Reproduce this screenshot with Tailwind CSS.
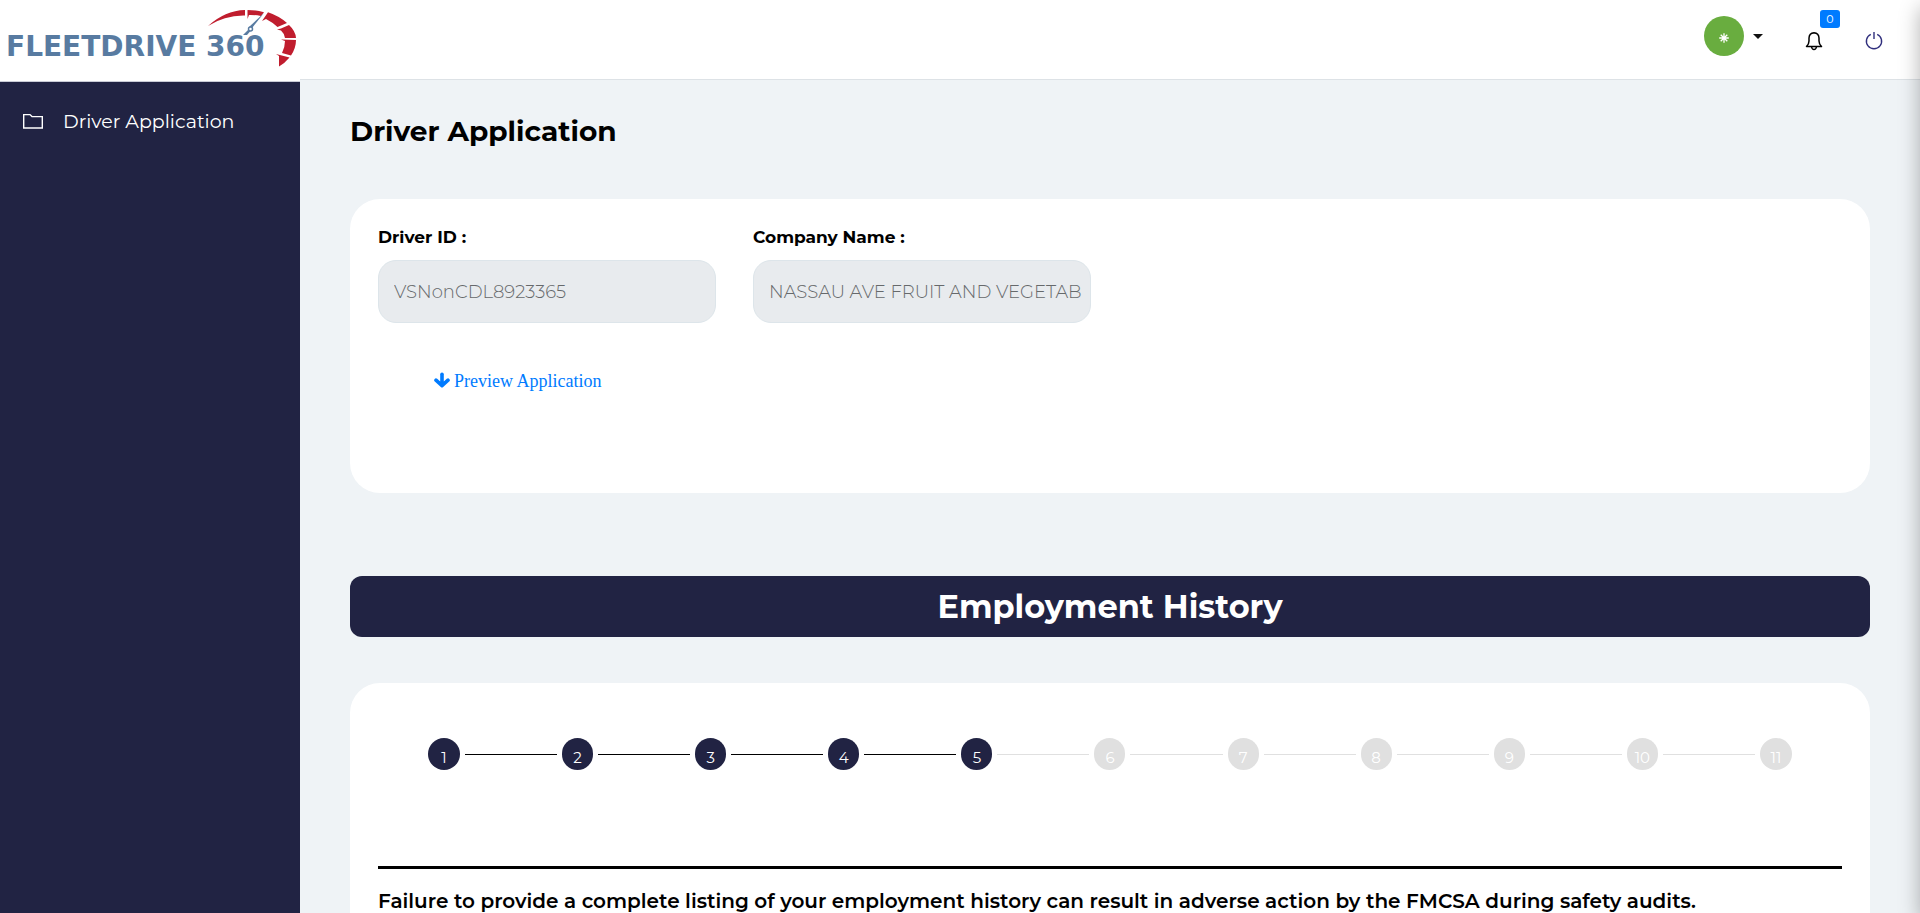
<!DOCTYPE html>
<html lang="en">
<head>
<meta charset="utf-8">
<meta name="viewport" content="width=device-width, initial-scale=1">
<title>Driver Application</title>
<script src="https://cdn.jsdelivr.net/npm/@tailwindcss/browser@4"></script>
</head>
<body class="flex min-h-screen bg-[#eff3f6] font-[Montserrat,Inter,sans-serif] text-black">

<aside class="flex w-[300px] shrink-0 flex-col bg-[#212343]">
  <a href="#" aria-label="FleetDrive 360 home" class="block h-[82px] border-b border-[#c9cbd6] bg-white">
    <svg viewBox="0 0 300 80" class="h-20 w-full">
      <text x="6" y="56" font-family="'DejaVu Sans', sans-serif" font-weight="700" font-size="28" fill="#587ba1">FLEETDRIVE 360</text>
      <g fill="#c01d2e">
        <path d="M208 26Q225 10.500 245 10V15.500Q225 15 208 26Z"/>
        <path d="M247.500 10Q256 10 264 12.300L261 16Q254 14.800 249 15L247.500 19Z"/>
        <path d="M268 12.300Q279 16 287 23L277.500 27Q272 22 266 19L262 21Z"/>
        <path d="M289 25Q295.500 31 296 38H285Q284 33 281 30.500L277 29.500L281 28.500Z"/>
        <path d="M296 40Q296 48 291 55.500L282 53Q285 47 285 41L281 39.500Z"/>
        <path d="M276 54L289.500 57.500Q285 63 279 66.500V56Z"/>
      </g>
      <path d="M264 13L252 28L249 27Z" fill="#587ba1"/>
      <path d="M248 30L243 35H247L250.500 31Z" fill="#587ba1"/>
      <circle cx="250.500" cy="29" r="2" fill="#fff" stroke="#587ba1" stroke-width="1.500"/>
    </svg>
  </a>
  <nav class="pt-6">
    <a href="#" class="flex h-8 items-center gap-[19px] pl-[22px] text-[19px] text-white">
      <svg viewBox="0 0 22 18" class="h-[18px] w-[22px]" fill="none" stroke="currentColor" stroke-width="1.400"><path d="M1.700 1.600H8L10 3.600H20.300V15H1.700Z"/></svg>
      Driver Application
    </a>
  </nav>
</aside>

<div class="flex min-w-0 flex-1 flex-col">
  <header class="flex h-20 items-start justify-end border-b border-[#dde2e6] bg-white pr-9">
    <button type="button" aria-label="Account menu" class="mt-4 flex items-center gap-[9px]">
      <span class="flex size-10 items-center justify-center rounded-full bg-[#69ad3f] text-white">
        <svg viewBox="0 0 12 12" class="mt-[3px] mr-px size-3" stroke="currentColor" stroke-width="1.300"><path d="M6 1.200V10.800M1.200 6H10.800M2.700 2.700L9.300 9.300M9.300 2.700L2.700 9.300"/></svg>
      </span>
      <svg viewBox="0 0 10 5" class="h-[5px] w-[10px]" fill="#111"><path d="M0 0H10L5 5Z"/></svg>
    </button>
    <button type="button" aria-label="Notifications" class="relative mt-[31px] ml-[41px]">
      <svg viewBox="0 0 20 20" class="size-5" fill="none" stroke="#000" stroke-width="1.500" stroke-linejoin="round"><path d="M2.500 15.600Q5 13 5 10V7Q5.200 2 10 1.700Q14.800 2 15 7V10Q15 13 17.500 15.600Z"/><path d="M7.600 16Q8 18.500 10 18.500Q12 18.500 12.400 16"/></svg>
      <span class="absolute -top-[21px] left-4 flex h-[18px] w-5 items-center justify-center rounded-[3px] bg-[#007bff] text-[11px] text-white">0</span>
    </button>
    <button type="button" aria-label="Log out" class="mt-[31px] ml-10">
      <svg viewBox="0 0 20 20" class="size-5" fill="none" stroke="#302f7d" stroke-width="1.400"><path d="M6.800 3.300A7.600 7.600 0 1 0 13.200 3.300M10 1V8"/></svg>
    </button>
  </header>

  <main class="flex flex-1 flex-col px-[50px]">
    <h1 class="mt-[31px] text-[28px] leading-10 font-bold">Driver Application</h1>

    <section class="mt-12 h-[294px] rounded-[30px] bg-white px-7 pt-[26px]">
      <div class="flex gap-[37px]">
        <div class="w-[338px]">
          <label for="driver-id" class="block text-[17px] leading-6 font-bold">Driver ID :</label>
          <input id="driver-id" disabled value="VSNonCDL8923365" class="mt-[11px] h-[63px] w-full rounded-[18px] border border-[#dde5ea] bg-[#e8ebee] pr-2 pl-[15px] text-[18px] font-light text-[#66696b]">
        </div>
        <div class="w-[338px]">
          <label for="company" class="block text-[17px] leading-6 font-bold">Company Name :</label>
          <input id="company" disabled value="NASSAU AVE FRUIT AND VEGETAB" class="mt-[11px] h-[63px] w-full rounded-[18px] border border-[#dde5ea] bg-[#e8ebee] pr-2 pl-[15px] text-[18px] font-light text-[#66696b]">
        </div>
      </div>
      <a href="#" class="mt-[46px] ml-14 inline-flex items-center gap-1 font-['Liberation_Serif',serif] text-[18px] leading-6 text-[#007bff]">
        <svg viewBox="0 0 16 16" class="-mt-0.5 size-4" fill="currentColor" stroke="currentColor" stroke-width="3.600" stroke-linecap="round" stroke-linejoin="round"><path d="M8 2.200V12" fill="none"/><path d="M2 8.200L8 13.600L14 8.200" fill="none"/><path d="M5 10H11L8 13Z" stroke-width="1"/></svg>
        Preview Application
      </a>
    </section>

    <h2 class="mt-[83px] h-[61px] rounded-xl bg-[#212343] text-center text-[32px] leading-[61px] font-bold text-white">Employment History</h2>

    <section class="mt-[46px] flex-1 rounded-t-[30px] bg-white px-7 pt-[55px]">
      <ol class="flex items-center gap-[5px] px-[50px] text-[15px] leading-8 text-white">
        <li class="size-8 rounded-full bg-[#212343] pt-1 text-center">1</li>
        <li aria-hidden="true" class="mt-px h-px flex-1 bg-black"></li>
        <li class="h-8 w-[31px] rounded-full bg-[#212343] pt-1 text-center">2</li>
        <li aria-hidden="true" class="mt-px h-px flex-1 bg-black"></li>
        <li class="h-8 w-[31px] rounded-full bg-[#212343] pt-1 text-center">3</li>
        <li aria-hidden="true" class="mt-px h-px flex-1 bg-black"></li>
        <li class="h-8 w-[31px] rounded-full bg-[#212343] pt-1 text-center">4</li>
        <li aria-hidden="true" class="mt-px h-px flex-1 bg-black"></li>
        <li aria-current="step" class="h-8 w-[31px] rounded-full bg-[#212343] pt-1 text-center">5</li>
        <li aria-hidden="true" class="mt-px h-px flex-1 bg-[#e0e0e0]"></li>
        <li class="h-8 w-[31px] rounded-full bg-[#e0e0e0] pt-1 text-center">6</li>
        <li aria-hidden="true" class="mt-px h-px flex-1 bg-[#e0e0e0]"></li>
        <li class="h-8 w-[31px] rounded-full bg-[#e0e0e0] pt-1 text-center">7</li>
        <li aria-hidden="true" class="mt-px h-px flex-1 bg-[#e0e0e0]"></li>
        <li class="h-8 w-[31px] rounded-full bg-[#e0e0e0] pt-1 text-center">8</li>
        <li aria-hidden="true" class="mt-px h-px flex-1 bg-[#e0e0e0]"></li>
        <li class="h-8 w-[31px] rounded-full bg-[#e0e0e0] pt-1 text-center">9</li>
        <li aria-hidden="true" class="mt-px h-px flex-1 bg-[#e0e0e0]"></li>
        <li class="h-8 w-[31px] rounded-full bg-[#e0e0e0] pt-1 text-center">10</li>
        <li aria-hidden="true" class="mt-px h-px flex-1 bg-[#e0e0e0]"></li>
        <li class="size-8 rounded-full bg-[#e0e0e0] pt-1 text-center">11</li>
      </ol>
      <hr class="mt-24 border-t-[3px] border-black">
      <p class="mt-5 text-[20px] leading-6 font-semibold">Failure to provide a complete listing of your employment history can result in adverse action by the FMCSA during safety audits.</p>
    </section>
  </main>
</div>

<!-- Closed drawer: only its shadow reaches into the window -->
<div aria-hidden="true" class="pointer-events-none fixed top-0 -right-60 h-screen w-60 shadow-[0_8px_20px_rgba(0,0,0,0.3)]"></div>
</body>
</html>
